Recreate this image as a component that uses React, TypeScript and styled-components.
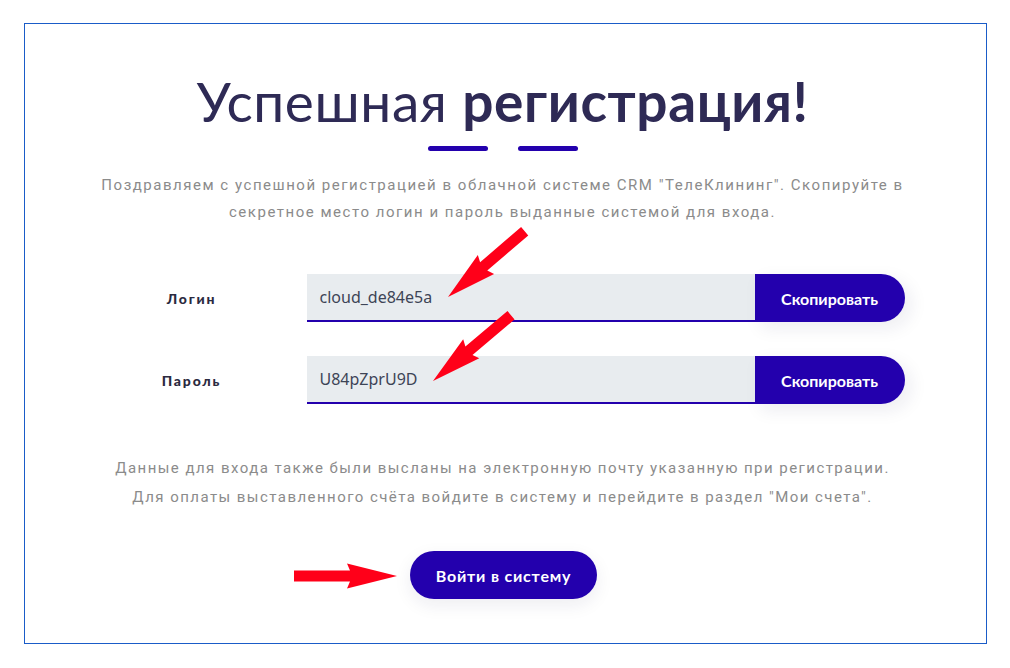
import styled, { createGlobalStyle } from "styled-components";

const GlobalStyle = createGlobalStyle`
	body {
		margin: 0;
		background: #ffffff;
		font-family: "Lato", "Noto Sans", sans-serif;
	}
`;

const credentials = [
	{ label: "Логин", value: "cloud_de84e5a" },
	{ label: "Пароль", value: "U84pZprU9D" },
];

// red annotation arrows, page coordinates
const arrows = [
	{ x: 448, y: 297, angle: 139.4, length: 101 },
	{ x: 433, y: 381, angle: 139.9, length: 102 },
	{ x: 397, y: 576, angle: 0, length: 103 },
];

const Arrow = ({ x, y, angle, length }: { x: number; y: number; angle: number; length: number }) => {
	const head = 47;
	const wing = 12.5;
	const shaft = 5.5;
	const points = [
		[0, 0],
		[-head - 3, -wing],
		[-head, -shaft],
		[-length, -shaft],
		[-length, shaft],
		[-head, shaft],
		[-head - 3, wing],
	]
		.map((p) => p.join(","))
		.join(" ");
	return <polygon points={points} fill="#ff0019" transform={`translate(${x} ${y}) rotate(${angle})`} />;
};

const App = () => {
	return (
		<Page>
			<GlobalStyle />
			<Card>
				<Title>
					Успешная <strong>регистрация!</strong>
				</Title>
				<Dashes>
					<Dash />
					<Dash />
				</Dashes>
				<Lead>
					Поздравляем с успешной регистрацией в облачной системе CRM "ТелеКлининг". Скопируйте в
					<br />
					секретное место логин и пароль выданные системой для входа.
				</Lead>
				<Fields>
					{credentials.map((c) => (
						<Field key={c.label}>
							<Label>{c.label}</Label>
							<Value>{c.value}</Value>
							<CopyButton>Скопировать</CopyButton>
						</Field>
					))}
				</Fields>
				<Note>
					Данные для входа также были высланы на электронную почту указанную при регистрации.
					<br />
					Для оплаты выставленного счёта войдите в систему и перейдите в раздел "Мои счета".
				</Note>
				<LoginButton>Войти в систему</LoginButton>
			</Card>
			<Annotations viewBox="0 0 1010 668">
				{arrows.map((a, i) => (
					<Arrow key={i} {...a} />
				))}
			</Annotations>
		</Page>
	);
};

export default App;

const Page = styled.div`
	position: relative;
	width: 1010px;
	height: 668px;
	padding: 23px 24px 0 24px;
	box-sizing: border-box;
`;

const Card = styled.div`
	width: 963px;
	height: 621px;
	box-sizing: border-box;
	border: 1px solid #1a5cc8;
	display: flex;
	flex-direction: column;
	align-items: center;
	padding: 44px 6px 0 0;
`;

const Title = styled.h1`
	margin: 0;
	font-family: "Lato", sans-serif;
	font-size: 55px;
	font-weight: 400;
	line-height: 66px;
	letter-spacing: 0.6px;
	color: #2e2a55;

	strong {
		font-weight: 700;
	}
`;

const Dashes = styled.div`
	display: flex;
	gap: 30px;
	margin-top: 12px;
`;

const Dash = styled.span`
	width: 60px;
	height: 5px;
	border-radius: 3px;
	background: #2300ad;
`;

const Lead = styled.p`
	margin: 21px 0 0;
	font-family: "Roboto", sans-serif;
	font-size: 15px;
	line-height: 27px;
	letter-spacing: 1.52px;
	color: #8b8b8b;
	text-align: center;
	white-space: nowrap;
`;

const Fields = styled.div`
	width: 798px;
	margin: 48px 0 0 6px;
	display: flex;
	flex-direction: column;
	gap: 34px;
`;

const Field = styled.div`
	display: grid;
	grid-template-columns: 200px 1fr 150px;
	height: 48px;
	align-items: center;
`;

const Label = styled.span`
	padding-right: 30px;
	text-align: center;
	font-family: "Lato", sans-serif;
	font-size: 14px;
	font-weight: 900;
	letter-spacing: 1.8px;
	color: #2b2a40;
`;

const Value = styled.div`
	height: 48px;
	box-sizing: border-box;
	padding: 0 13px;
	display: flex;
	align-items: center;
	background: #e8ecef;
	border-bottom: 2px solid #2300ad;
	font-family: "Noto Sans", sans-serif;
	font-size: 16px;
	color: #3d4456;
`;

const CopyButton = styled.button`
	height: 48px;
	border: none;
	border-radius: 0 24px 24px 0;
	background: #2300ad;
	color: #ffffff;
	font-family: "Lato", sans-serif;
	font-size: 16px;
	font-weight: 700;
	padding: 0;
	box-shadow: 6px 6px 18px rgba(30, 30, 80, 0.08);
`;

const Note = styled.p`
	margin: 50px 0 0;
	font-family: "Roboto", sans-serif;
	font-size: 15px;
	line-height: 29px;
	letter-spacing: 1.45px;
	color: #8b8b8b;
	text-align: center;
	white-space: nowrap;
`;

const LoginButton = styled.button`
	margin: 39px 0 0 2px;
	width: 187px;
	height: 48px;
	border: none;
	border-radius: 24px;
	background: #2300ad;
	color: #ffffff;
	font-family: "Lato", sans-serif;
	font-size: 16px;
	font-weight: 700;
	letter-spacing: 0.8px;
	box-shadow: 0 6px 18px rgba(30, 30, 80, 0.08);
`;

const Annotations = styled.svg`
	position: absolute;
	top: 0;
	left: 0;
	width: 1010px;
	height: 668px;
	pointer-events: none;
`;
